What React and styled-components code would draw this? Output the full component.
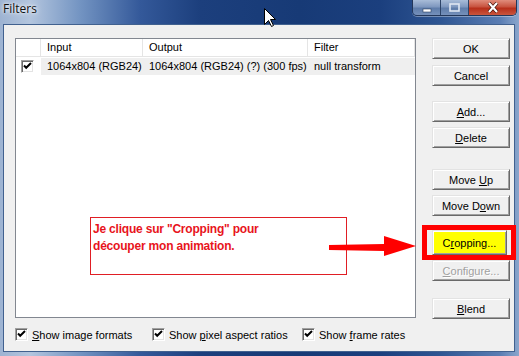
import styled, { createGlobalStyle } from 'styled-components'

const GlobalStyle = createGlobalStyle`
  html, body {
    margin: 0;
    padding: 0;
    background: #ffffff;
  }
  body {
    font-family: "Liberation Sans", Arial, sans-serif;
    font-size: 11px;
    color: #000;
  }
`;

const Window = styled.div`
  position: relative;
  width: 519px;
  height: 356px;
  display: flex;
  flex-direction: column;
  overflow: hidden;
  background: linear-gradient(90deg, #9db3d2 0px, #b3c5de 30px, #7394c2 80px, #34599a 140px, #1c3f7d 200px, #173a76 300px, #1b3f7e 380px, #2e5592 440px, #5a7db3 500px, #8aa6cc 519px);
`;

const TitleBar = styled.div`
  height: 24px;
  display: flex;
  align-items: flex-start;
  padding-left: 3px;
`;

const Title = styled.span`
  margin-top: 1px;
  font-family: "Open Sans", "Noto Sans", sans-serif;
  font-size: 12px;
  line-height: 16px;
  color: #111;
  text-shadow: 0 0 6px #ffffff, 0 0 3px #ffffff;
`;

const CaptionGroup = styled.div`
  margin-left: auto;
  margin-right: 2px;
  display: flex;
  height: 15px;
  border: 1px solid #23375a;
  border-top: none;
  border-radius: 0 0 5px 5px;
  overflow: hidden;
  box-shadow: 0 1px 0 rgba(255, 255, 255, 0.35);
`;

const CaptionButton = styled.div`
  width: ${p => p.$w}px;
  display: flex;
  align-items: center;
  justify-content: center;
  background: ${p => p.$close
    ? 'linear-gradient(#e08d7c, #c8533f 45%, #b72f1a 55%, #c9553d)'
    : 'linear-gradient(#a8bcd8, #7f98bf 45%, #5f7daa 55%, #7590bb)'};
  border-left: ${p => p.$first ? 'none' : '1px solid #2d4468'};
`;

const Client = styled.div`
  position: relative;
  flex: 1;
  margin: 0 4px 4px 3px;
  display: flex;
  padding: 13px 0 0 11px;
  background: #f0f0f0;
  border: 1px solid #41618f;
`;

const Main = styled.div`
  width: 401px;
  display: flex;
  flex-direction: column;
`;

const ListView = styled.div`
  height: 280px;
  box-sizing: border-box;
  background: #fff;
  border: 1px solid #828790;
`;

const HeaderRow = styled.div`
  display: flex;
  height: 17px;
  border-bottom: 1px solid #e5e5e5;
`;

const HeaderCell = styled.div`
  width: ${p => p.$w}px;
  flex: ${p => p.$grow ? 1 : 'none'};
  box-sizing: border-box;
  padding-left: 6px;
  line-height: 17px;
  border-right: 1px solid #e5e5e5;
`;

const DataRow = styled.div`
  display: flex;
  height: 17px;
  margin-top: 1px;
`;

const CheckCell = styled.div`
  width: 25px;
  padding: 2px 0 0 5px;
  box-sizing: border-box;
`;

const DataCell = styled.div`
  width: ${p => p.$w}px;
  flex: ${p => p.$grow ? 1 : 'none'};
  box-sizing: border-box;
  padding-left: 6px;
  line-height: 17px;
  background: #efefef;
  white-space: nowrap;
`;

const Box = styled.span`
  display: inline-flex;
  align-items: center;
  justify-content: center;
  width: 13px;
  height: 13px;
  box-sizing: border-box;
  background: #fff;
  border: 1px solid;
  border-color: #a0a0a0 #ffffff #ffffff #a0a0a0;
  box-shadow: inset 1px 1px #696969, inset -1px -1px #e3e3e3;
`;

const Options = styled.div`
  margin-top: 10px;
  display: grid;
  grid-template-columns: 137px 150px auto;
`;

const Option = styled.label`
  display: flex;
  align-items: center;
  gap: 4px;
  height: 13px;
  white-space: nowrap;
`;

const ButtonColumn = styled.div`
  margin-left: 16px;
  width: 78px;
  display: flex;
  flex-direction: column;
`;

const Button = styled.div`
  height: ${p => p.$h || 21}px;
  margin-top: ${p => p.$gap || 0}px;
  box-sizing: border-box;
  display: flex;
  align-items: center;
  justify-content: center;
  background: ${p => p.$yellow ? '#ffff00' : '#f0f0f0'};
  color: ${p => p.$disabled ? '#a0a0a0' : '#000'};
  text-shadow: ${p => p.$disabled ? '1px 1px 0 #ffffff' : 'none'};
  border: 1px solid;
  border-color: #e3e3e3 #696969 #696969 #e3e3e3;
  box-shadow: inset 1px 1px #ffffff, inset -1px -1px #a0a0a0;
  white-space: nowrap;
`;

const Highlight = styled.div`
  margin: 9px -6px 0 -10px;
  padding: 0 4px 0 5px;
  border: 5px solid #ff0000;
`;

const Callout = styled.div`
  position: absolute;
  left: 86px;
  top: 192px;
  width: 257px;
  height: 58px;
  box-sizing: border-box;
  padding: 3px 0 0 2px;
  border: 1px solid #e01e24;
  background: #fff;
  color: #e8141c;
  font-family: "Liberation Sans", Arial, sans-serif;
  font-weight: bold;
  font-size: 12px;
  line-height: 17px;
  letter-spacing: -0.2px;
`;

const Arrow = styled.svg`
  position: absolute;
  left: 322px;
  top: 209px;
`;

const Cursor = styled.svg`
  position: absolute;
  left: 264px;
  top: 8px;
`;

function Check() {
  return (
    <Box>
      <svg width="9" height="9" viewBox="0 0 9 9">
        <path d="M1 3.5 L3.2 5.8 L8 1" fill="none" stroke="#000" strokeWidth="2" />
      </svg>
    </Box>
  );
}

const buttons = [
  { label: <>OK</>, gap: 0 },
  { label: <>Cancel</>, gap: 6 },
  { label: <><u>A</u>dd...</>, gap: 15 },
  { label: <><u>D</u>elete</>, gap: 5 },
  { label: <>Move <u>U</u>p</>, gap: 21 },
  { label: <>Move D<u>o</u>wn</>, gap: 5 },
];

function App() {
  return (
    <>
      <GlobalStyle />
      <Window>
        <TitleBar>
          <Title>Filters</Title>
          <CaptionGroup>
            <CaptionButton $w={27} $first>
              <svg width="10" height="10" viewBox="0 0 10 10">
                <rect x="1" y="6" width="8" height="3" fill="#fff" stroke="#2a3e5e" strokeWidth="0.6" />
              </svg>
            </CaptionButton>
            <CaptionButton $w={27}>
              <svg width="11" height="10" viewBox="0 0 11 10">
                <rect x="1" y="1" width="9" height="7" fill="none" stroke="#dfe7f2" strokeWidth="1.6" />
              </svg>
            </CaptionButton>
            <CaptionButton $w={47} $close>
              <svg width="12" height="11" viewBox="0 0 12 11">
                <path d="M2 1 L10 10 M10 1 L2 10" stroke="#3a0d06" strokeWidth="3.4" />
                <path d="M2 1 L10 10 M10 1 L2 10" stroke="#fff" strokeWidth="2.2" />
              </svg>
            </CaptionButton>
          </CaptionGroup>
        </TitleBar>

        <Client>
          <Main>
            <ListView>
              <HeaderRow>
                <HeaderCell $w={25} />
                <HeaderCell $w={102}>Input</HeaderCell>
                <HeaderCell $w={165}>Output</HeaderCell>
                <HeaderCell $grow>Filter</HeaderCell>
              </HeaderRow>
              <DataRow>
                <CheckCell><Check /></CheckCell>
                <DataCell $w={102}>1064x804 (RGB24)</DataCell>
                <DataCell $w={165}>1064x804 (RGB24) (?) (300 fps)</DataCell>
                <DataCell $grow>null transform</DataCell>
              </DataRow>
            </ListView>
            <Options>
              <Option><Check /><span><u>S</u>how image formats</span></Option>
              <Option><Check /><span>Show <u>p</u>ixel aspect ratios</span></Option>
              <Option><Check /><span>Show <u>f</u>rame rates</span></Option>
            </Options>
          </Main>

          <ButtonColumn>
            {buttons.map((b, i) => (
              <Button key={i} $gap={b.gap}><span>{b.label}</span></Button>
            ))}
            <Highlight>
              <Button $yellow $h={25}><span>C<u>r</u>opping...</span></Button>
            </Highlight>
            <Button $disabled><span><u>C</u>onfigure...</span></Button>
            <Button $gap={17}><span><u>B</u>lend</span></Button>
          </ButtonColumn>

          <Callout>
            Je clique sur "Cropping" pour<br />
            découper mon animation.
          </Callout>
          <Arrow width="92" height="26" viewBox="0 0 92 26">
            <path d="M3 11 L58 10 L58 2 L90 12 L58 22 L58 17 L3 16 Z" fill="#ff0000" />
          </Arrow>
        </Client>

        <Cursor width="13" height="20" viewBox="0 0 13 20">
          <path d="M0.5 0.5 L0.5 16.5 L4.5 12.5 L7.5 18.5 L9.5 17.5 L6.5 11.5 L11.5 11.5 Z" fill="#fff" stroke="#000" strokeWidth="1" />
        </Cursor>
      </Window>
    </>
  );
}

export default App;
